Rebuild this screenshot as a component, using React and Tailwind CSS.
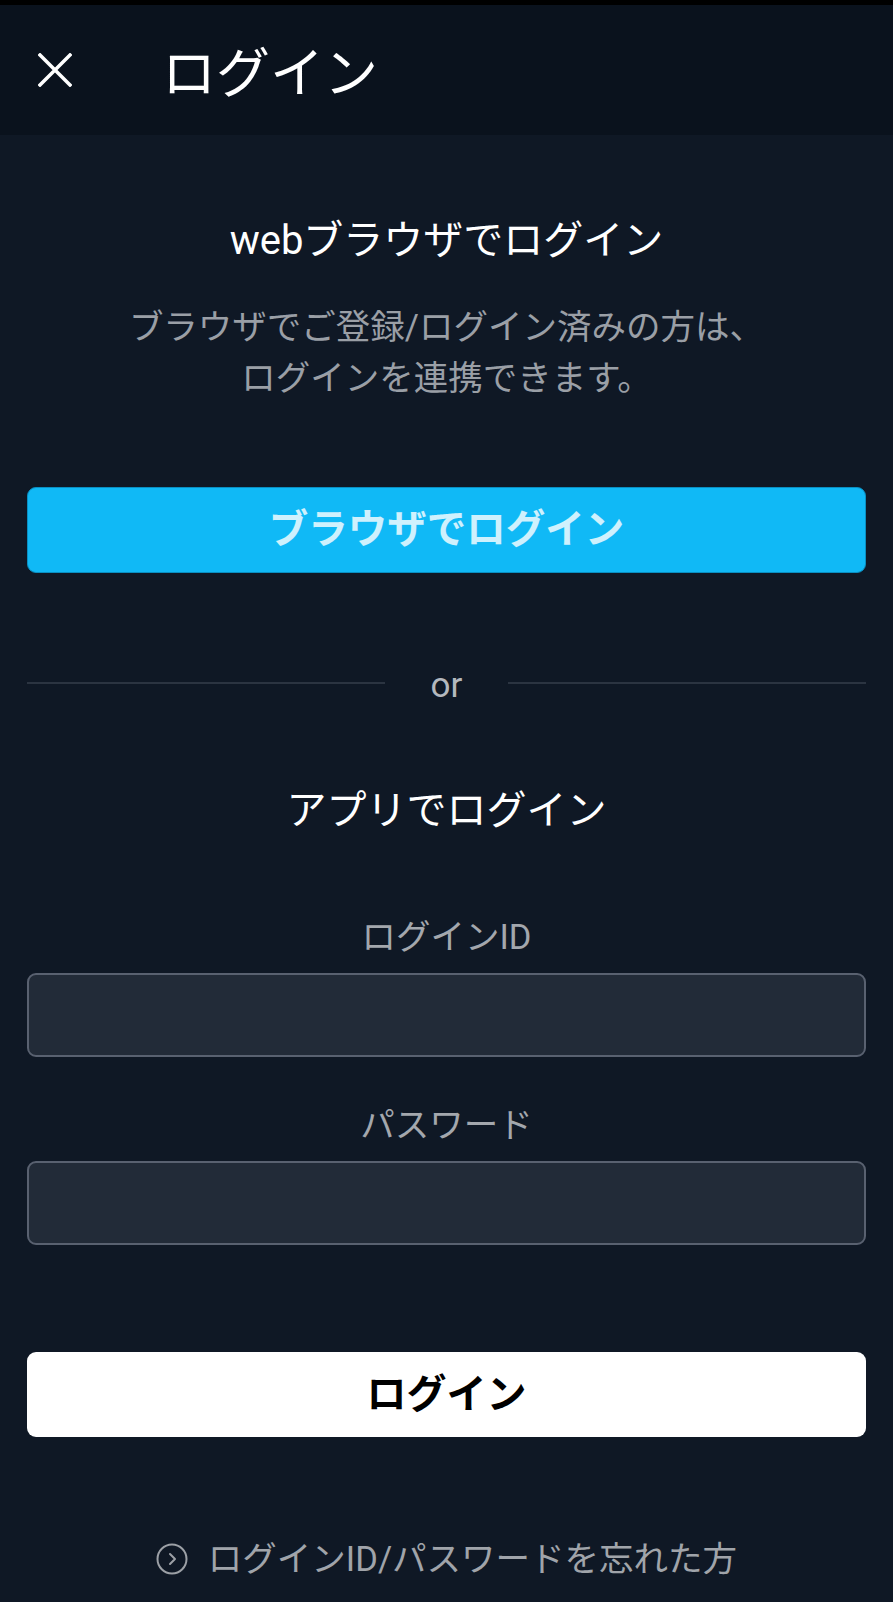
import React from 'react';

const font = { fontFamily: 'Roboto, "Noto Sans CJK JP", sans-serif' };

const CloseIcon = () => (
  <svg width="34" height="34" viewBox="0 0 34 34" fill="none">
    <path d="M2 2L32 32M32 2L2 32" stroke="white" strokeWidth="3.5" strokeLinecap="square" />
  </svg>
);

const CircleChevron = () => (
  <svg width="32" height="32" viewBox="0 0 32 32" fill="none">
    <circle cx="16" cy="16" r="14.5" stroke="#9ca0a6" strokeWidth="2" />
    <path d="M14 11L19 16L14 21" stroke="#9ca0a6" strokeWidth="2" strokeLinecap="round" strokeLinejoin="round" />
  </svg>
);

const Field = ({ label, type = 'text', labelTop }) => (
  <div className="flex flex-col">
    <label className={`${labelTop} text-center text-[34.5px] leading-[40px] text-[#a3a7ad]`}>{label}</label>
    <input
      type={type}
      className="mt-[16px] h-[84px] w-full rounded-[9px] border-2 border-[#596170] bg-[#222b38] px-4 text-[30px] text-white outline-none"
    />
  </div>
);

export default function App() {
  return (
    <div className="min-h-[1602px] w-full bg-[#0f1825]" style={font}>
      <div className="h-[5px] bg-black" />
      <header className="flex h-[130px] items-center bg-[#0a121d] pl-[38px]">
        <button className="flex h-[34px] w-[34px] items-center justify-center">
          <CloseIcon />
        </button>
        <h1 className="ml-[90px] pt-[9px] text-[54px] leading-[60px] text-white">ログイン</h1>
      </header>

      <main className="flex flex-col px-[27px]">
        <h2 className="mt-[84px] text-center text-[40px] leading-[44px] text-white">webブラウザでログイン</h2>
        <p className="mt-[39px] text-center text-[34.5px] leading-[51px] text-[#9a9fa6]">
          ブラウザでご登録/ログイン済みの方は、
          <br />
          ログインを連携できます。
        </p>

        <button className="mt-[83px] h-[86px] w-full rounded-[9px] border border-[#0a8fc2] bg-[#10b9f6] text-[39.5px] font-bold text-white/80">
          ブラウザでログイン
        </button>

        <div className="mt-[91px] flex h-[44px] items-center">
          <div className="h-[2px] flex-1 -translate-y-[3px] bg-[#2b3441]" />
          <span className="px-[46px] text-[35px] leading-[44px] text-[#b4b8be]">or</span>
          <div className="h-[2px] flex-1 -translate-y-[3px] bg-[#2b3441]" />
        </div>

        <h2 className="mt-[81px] text-center text-[40px] leading-[44px] text-white">アプリでログイン</h2>

        <Field label="ログインID" labelTop="mt-[84px]" />
        <Field label="パスワード" type="password" labelTop="mt-[48px]" />

        <button className="mt-[107px] h-[85px] w-full rounded-[9px] bg-white text-[40px] font-bold text-black">
          ログイン
        </button>

        <a href="#" className="mt-[102px] flex items-center justify-center gap-[20px] text-[34.5px] leading-[40px] text-[#a0a4aa]">
          <CircleChevron />
          <span>ログインID/パスワードを忘れた方</span>
        </a>
      </main>
    </div>
  );
}
